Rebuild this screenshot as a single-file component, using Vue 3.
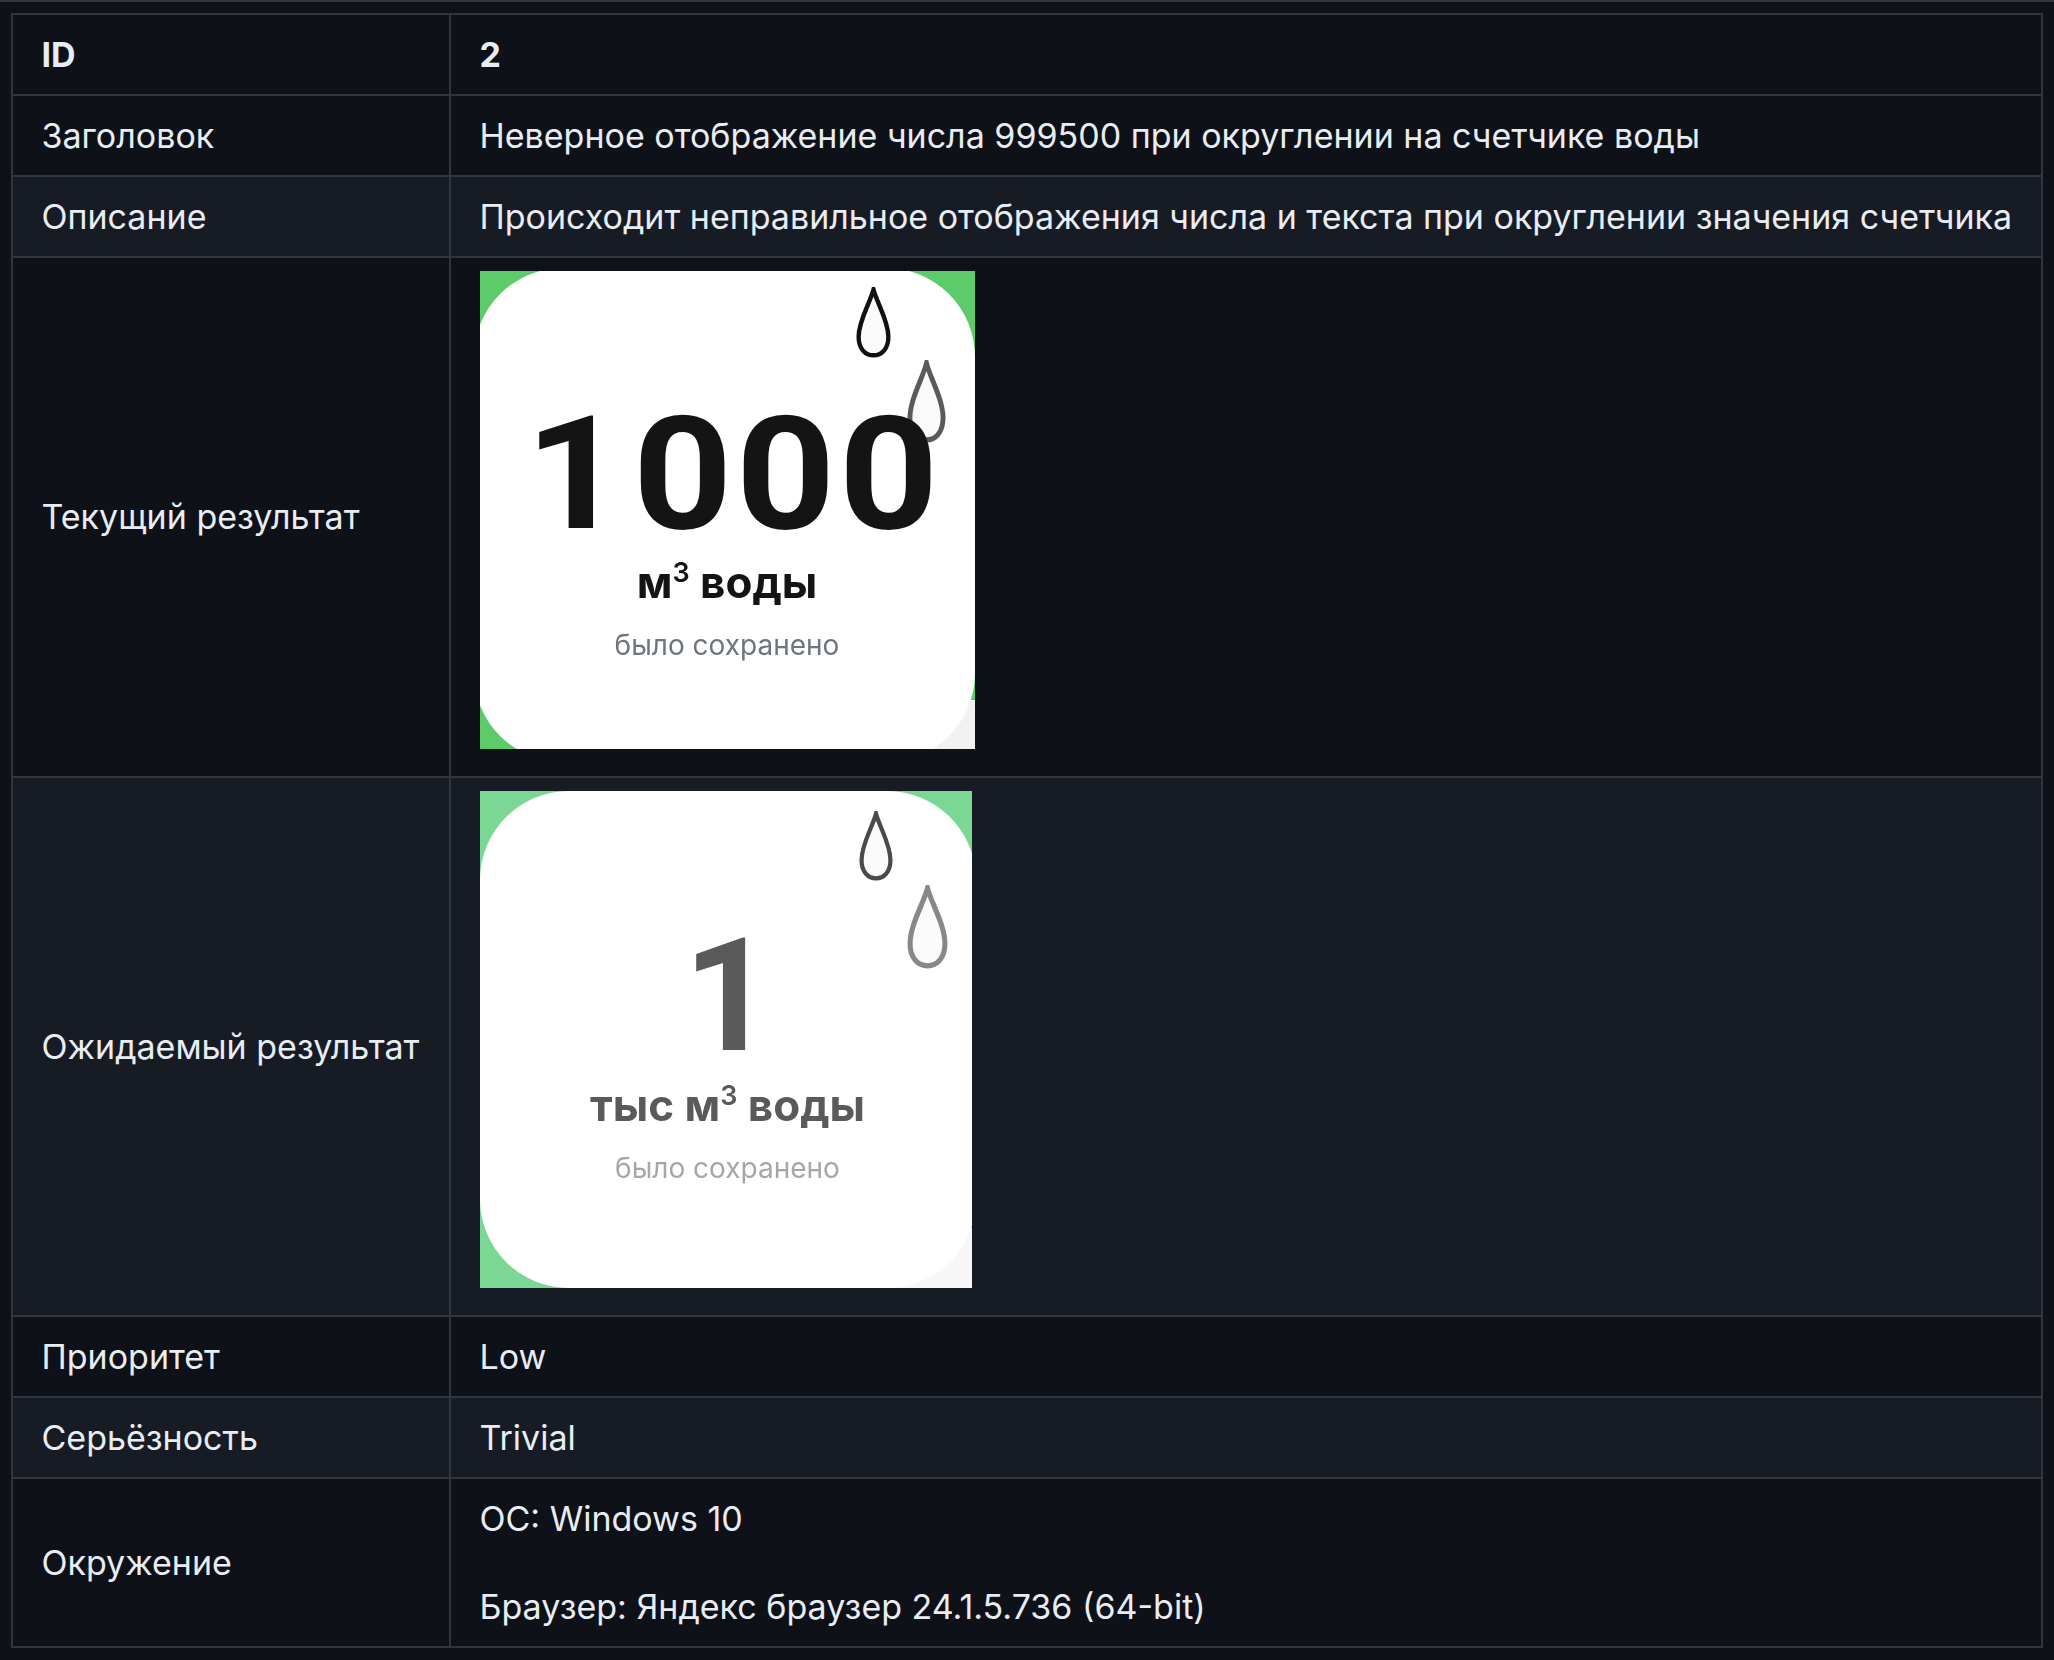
<script setup>
const drop = 'M20 3 C24 18 37 38 37 56 C37 70 29 77 20 77 C11 77 3 70 3 56 C3 38 16 18 20 3 Z'
</script>

<template>
  <div class="page">
    <table class="spec">
      <colgroup>
        <col class="col-name" />
        <col />
      </colgroup>
      <thead>
        <tr>
          <th>ID</th>
          <th>2</th>
        </tr>
      </thead>
      <tbody>
        <tr>
          <td>Заголовок</td>
          <td>Неверное отображение числа 999500 при округлении на счетчике воды</td>
        </tr>
        <tr class="alt">
          <td>Описание</td>
          <td>Происходит неправильное отображения числа и текста при округлении значения счетчика</td>
        </tr>
        <tr>
          <td>Текущий результат</td>
          <td class="shot-cell">
            <div class="shot current">
              <span class="fold"></span>
              <svg class="drop drop-a" viewBox="0 0 40 80" preserveAspectRatio="none"><path :d="drop" /></svg>
              <svg class="drop drop-b" viewBox="0 0 40 80" preserveAspectRatio="none"><path :d="drop" /></svg>
              <div class="count">1 000</div>
              <div class="unit">м<sup>3</sup> воды</div>
              <div class="note">было сохранено</div>
            </div>
          </td>
        </tr>
        <tr class="alt">
          <td>Ожидаемый результат</td>
          <td class="shot-cell">
            <div class="shot expected">
              <span class="fold"></span>
              <svg class="drop drop-a" viewBox="0 0 40 80" preserveAspectRatio="none"><path :d="drop" /></svg>
              <svg class="drop drop-b" viewBox="0 0 40 80" preserveAspectRatio="none"><path :d="drop" /></svg>
              <div class="count">1</div>
              <div class="unit">тыс м<sup>3</sup> воды</div>
              <div class="note">было сохранено</div>
            </div>
          </td>
        </tr>
        <tr>
          <td>Приоритет</td>
          <td>Low</td>
        </tr>
        <tr class="alt">
          <td>Серьёзность</td>
          <td>Trivial</td>
        </tr>
        <tr>
          <td>Окружение</td>
          <td>ОС: Windows 10<br /><br />Браузер: Яндекс браузер 24.1.5.736 (64-bit)</td>
        </tr>
      </tbody>
    </table>
  </div>
</template>

<style>
html,
body {
  margin: 0;
  background: #0e1117;
}
</style>

<style scoped>
.page {
  box-sizing: border-box;
  height: 1660px;
  border-top: 2px solid #30363d;
  padding: 11px 11px 0;
  background: #0e1117;
  color: #e8ecf3;
  font-family: Inter, "Noto Sans", sans-serif;
  font-size: 34px;
  line-height: 44px;
}

.spec {
  width: 2032px;
  table-layout: fixed;
  border-collapse: collapse;
}

.col-name {
  width: 438px;
}

th,
td {
  padding: 17.5px 29px 17.5px 28.5px;
  border: 2px solid #30363d;
  text-align: left;
  vertical-align: middle;
  white-space: nowrap;
}

th {
  font-weight: 700;
}

td {
  font-weight: 400;
}

.alt td {
  background: #171b24;
}

td.shot-cell {
  padding: 13px 29px 27px 28.5px;
}

.shot {
  position: relative;
  box-sizing: border-box;
  overflow: hidden;
  display: flex;
  flex-direction: column;
  align-items: center;
  font-family: Inter, sans-serif;
  line-height: 1;
  z-index: 0;
  filter: blur(0.6px);
}

.shot::before {
  content: "";
  position: absolute;
  z-index: -1;
  background: #fff;
  border-radius: 89px;
}

.current {
  width: 495px;
  height: 478px;
  background: #5ecb6b;
  color: #141414;
}

.current::before {
  inset: -3px 0 -13px -6px;
}

.expected {
  width: 492px;
  height: 497px;
  padding-left: 4px;
  background: #7bd894;
  color: #5a5a5a;
}

.expected::before {
  inset: 0 -4px 0 0;
}

.fold {
  position: absolute;
  right: 0;
  bottom: 0;
  z-index: -2;
  width: 60px;
  height: 49px;
  background: #f2f2f2;
}

.expected .fold {
  width: 84px;
  height: 60px;
  background: #f7f7f7;
}

.drop {
  position: absolute;
  fill: #fbfbfb;
  stroke-width: 5;
}

.drop-a {
  left: 376px;
  top: 16px;
  width: 35px;
  height: 71px;
}

.drop-b {
  left: 427px;
  top: 89px;
  width: 39px;
  height: 83px;
}

.current .drop-a {
  stroke: #111;
}

.current .drop-b {
  stroke: #5a5a5a;
}

.expected .drop-a {
  left: 379px;
  top: 20px;
  width: 34px;
  height: 70px;
  stroke: #4a4a4a;
}

.expected .drop-b {
  left: 427px;
  top: 94px;
  width: 41px;
  height: 84px;
  stroke: #888;
}

.count {
  position: relative;
  font-family: Roboto, Inter, sans-serif;
  font-size: 158px;
  font-weight: 700;
  line-height: 160px;
}

.current .count {
  margin-top: 123px;
  margin-left: 13px;
  letter-spacing: 3px;
  word-spacing: -38px;
  transform: scaleX(1.1);
}

.expected .count {
  margin-top: 125px;
  margin-left: 2px;
}

.unit {
  font-size: 44px;
  font-weight: 700;
  line-height: 48px;
}

.current .unit {
  margin-top: 4px;
}

.expected .unit {
  margin-top: 5px;
}

.unit sup {
  font-size: 27px;
  line-height: 0;
  font-weight: 600;
}

.note {
  margin-top: 22px;
  font-size: 28px;
  line-height: 34px;
  color: #6f7480;
}

.expected .note {
  color: #a6a6a6;
}
</style>
